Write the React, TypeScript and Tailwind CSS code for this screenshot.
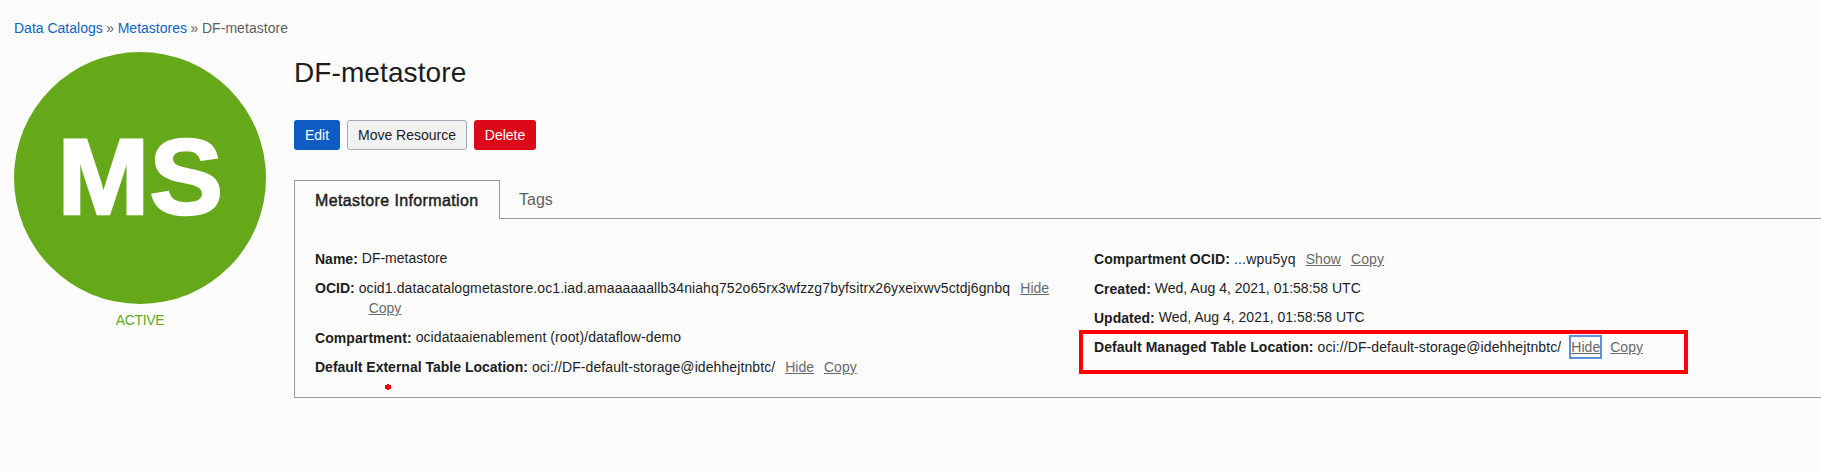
import type { ReactNode } from 'react';

function Label({ children }: { children: ReactNode }) {
  return <dt className="shrink-0 font-bold whitespace-nowrap">{children}</dt>;
}

function Action({ children, focused = false }: { children: ReactNode; focused?: boolean }) {
  return (
    <a
      href="#"
      className={
        focused
          ? 'text-[#696969] underline outline-2 outline-offset-0 outline-[#5d90dc]'
          : 'text-[#696969] underline'
      }
    >
      {children}
    </a>
  );
}

function Row({ label, children }: { label: string; children: ReactNode }) {
  return (
    <div className="flex h-5 gap-1">
      <Label>{label}</Label>
      <dd className="flex gap-[10px] whitespace-nowrap">{children}</dd>
    </div>
  );
}

function PlainValue({ children }: { children: ReactNode }) {
  return <span className="-mt-px">{children}</span>;
}

export default function App() {
  return (
    <div className="h-[471px] w-full overflow-hidden bg-[#fcfcfc] pl-[14px] pt-[18px] font-['Liberation_Sans',Arial,sans-serif] text-sm leading-5 text-[#1c1c1c]">
      <nav className="flex h-[34px] gap-[3.6px] whitespace-nowrap text-[#5f5f5f]">
        <a href="#" className="text-[#0f62c4]">Data Catalogs</a>
        <span>»</span>
        <a href="#" className="text-[#0f62c4]">Metastores</a>
        <span>»</span>
        <span className="tracking-[0.05px]">DF-metastore</span>
      </nav>
      <div className="flex">
        <aside className="w-[252px] shrink-0 text-center">
          <div className="flex size-[252px] items-center justify-center rounded-full bg-[#65a91b] text-white">
            <span className="-mt-[2px] ml-[1px] scale-x-[1.03] text-[107px] leading-none font-bold [-webkit-text-stroke:2.5px_white]">MS</span>
          </div>
          <div className="mt-[6px] tracking-[-0.35px] text-[#65a91b]">ACTIVE</div>
        </aside>
        <main className="ml-7 min-w-0 flex-1">
          <h1 className="h-[68px] pt-[3px] text-[28px] leading-9 tracking-[0.1px]">DF-metastore</h1>
          <div className="flex h-[60px] items-start gap-[7px]">
            <button className="h-[30px] w-[46px] rounded-[3px] bg-[#0f5bc4] text-white">Edit</button>
            <button className="h-[30px] w-[120px] rounded-[3px] border border-[#a3a9b5] bg-[#f2f2f2] whitespace-nowrap">Move Resource</button>
            <button className="h-[30px] w-[62px] rounded-[3px] bg-[#dc0a18] text-white">Delete</button>
          </div>
          <div className="flex h-[39px] text-base leading-5">
            <div className="w-[206px] border-x border-t border-[#9a9a9a] pl-5 pt-[10px] tracking-[0.38px] whitespace-nowrap [-webkit-text-stroke:0.45px_#1c1c1c]">
              Metastore Information
            </div>
            <div className="flex-1 border-b border-[#9a9a9a] pl-[19px] pt-[10px] text-[#5f5f5f]">Tags</div>
          </div>
          <section className="flex h-[179px] border-b border-l border-[#9a9a9a] pl-5 pt-[30px]">
            <dl className="flex w-[779px] shrink-0 flex-col">
              <Row label="Name:"><PlainValue>DF-metastore</PlainValue></Row>
              <div className="mt-[9px] flex h-10 gap-1">
                <Label>OCID:</Label>
                <dd>
                  <div className="flex gap-[10px] whitespace-nowrap">
                    <span className="tracking-[0.1px]">ocid1.datacatalogmetastore.oc1.iad.amaaaaaallb34niahq752o65rx3wfzzg7byfsitrx26yxeixwv5ctdj6gnbq</span>
                    <Action>Hide</Action>
                  </div>
                  <div className="pl-[10px]"><Action>Copy</Action></div>
                </dd>
              </div>
              <div className="mt-[10px] tracking-[0.08px]">
                <Row label="Compartment:"><PlainValue>ocidataaienablement (root)/dataflow-demo</PlainValue></Row>
              </div>
              <div className="relative mt-[9px]">
                <Row label="Default External Table Location:">
                  <span className="tracking-[0.09px]">oci://DF-default-storage@idehhejtnbtc/</span>
                  <Action>Hide</Action>
                  <Action>Copy</Action>
                </Row>
                <svg className="absolute top-[27px] left-[70px]" width="6" height="6" viewBox="0 0 6 6">
                  <path d="M2 0h2v1h2v4H4v1H2V5H0V1h2z" fill="#ff0009" />
                </svg>
              </div>
            </dl>
            <dl className="flex flex-col">
              <div className="tracking-[0.08px]">
                <Row label="Compartment OCID:">
                  <span className="tracking-[0.2px]">...wpu5yq</span>
                  <Action>Show</Action>
                  <Action>Copy</Action>
                </Row>
              </div>
              <div className="mt-[10px]">
                <Row label="Created:"><PlainValue>Wed, Aug 4, 2021, 01:58:58 UTC</PlainValue></Row>
              </div>
              <div className="mt-[9px]">
                <Row label="Updated:"><PlainValue>Wed, Aug 4, 2021, 01:58:58 UTC</PlainValue></Row>
              </div>
              <div className="relative mt-[9px] tracking-[0.04px]">
                <Row label="Default Managed Table Location:">
                  <span className="tracking-[0.1px]">oci://DF-default-storage@idehhejtnbtc/</span>
                  <Action focused>Hide</Action>
                  <Action>Copy</Action>
                </Row>
                <span className="pointer-events-none absolute -top-[7px] -left-[15px] h-11 w-[609px] border-4 border-[#ff0009]" />
              </div>
            </dl>
          </section>
        </main>
      </div>
    </div>
  );
}
